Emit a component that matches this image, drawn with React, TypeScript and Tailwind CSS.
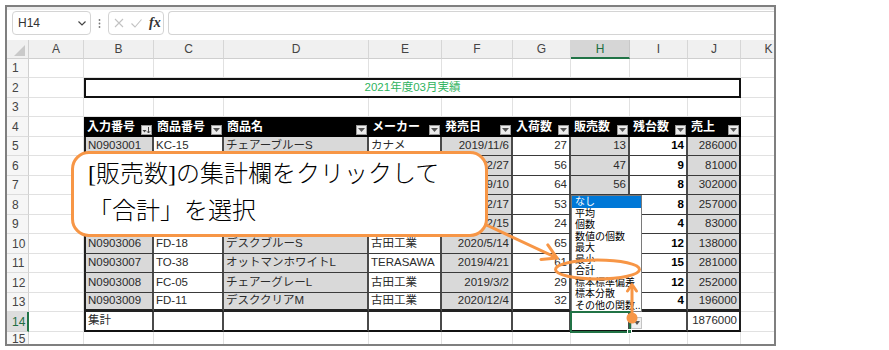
import React from "react";

type Col = { w: string; gray: boolean; right: boolean; bold?: boolean };

const COLS: Col[] = [
  { w: "w-[70px]", gray: true, right: false },
  { w: "w-[70px]", gray: false, right: false },
  { w: "w-[145px]", gray: true, right: false },
  { w: "w-[73px]", gray: false, right: false },
  { w: "w-[71px]", gray: true, right: true },
  { w: "w-[58px]", gray: false, right: true },
  { w: "w-[59px]", gray: true, right: true },
  { w: "w-[58px]", gray: false, right: true, bold: true },
  { w: "w-[53px]", gray: true, right: true },
];

const LETTERS = [
  { l: "A", w: "w-[55px]" },
  { l: "B", w: "w-[70px]" },
  { l: "C", w: "w-[70px]" },
  { l: "D", w: "w-[145px]" },
  { l: "E", w: "w-[73px]" },
  { l: "F", w: "w-[71px]" },
  { l: "G", w: "w-[58px]" },
  { l: "H", w: "w-[59px]" },
  { l: "I", w: "w-[58px]" },
  { l: "J", w: "w-[53px]" },
  { l: "K", w: "w-[56px]" },
];

const HEADERS = ["入力番号", "商品番号", "商品名", "メーカー", "発売日", "入荷数", "販売数", "残台数", "売上"];

const DATA: string[][] = [
  ["N0903001", "KC-15", "チェアーブルーS", "カナメ", "2019/11/6", "27", "13", "14", "286000"],
  ["N0903002", "KC-16", "チェアーブルーL", "カナメ", "2020/2/27", "56", "47", "9", "81000"],
  ["N0903003", "KC-21", "チェアーホワイトS", "カナメ", "2019/9/10", "64", "56", "8", "302000"],
  ["N0903004", "FD-10", "デスクホワイトS", "古田工業", "2020/2/17", "53", "45", "8", "257000"],
  ["N0903005", "TO-12", "オットマンブルーS", "TERASAWA", "2019/2/15", "24", "20", "4", "83000"],
  ["N0903006", "FD-18", "デスクブルーS", "古田工業", "2020/5/14", "65", "53", "12", "138000"],
  ["N0903007", "TO-38", "オットマンホワイトL", "TERASAWA", "2019/4/21", "61", "46", "15", "281000"],
  ["N0903008", "FC-05", "チェアーグレーL", "古田工業", "2019/3/2", "29", "17", "12", "252000"],
  ["N0903009", "FD-11", "デスククリアM", "古田工業", "2020/12/4", "32", "28", "4", "196000"],
];

const ROW_H = [
  "h-[19px]", "h-[20px]", "h-[19px]", "h-[20px]", "h-[19px]", "h-[20px]", "h-[19px]", "h-[20px]",
  "h-[19px]", "h-[20px]", "h-[19px]", "h-[20px]", "h-[19px]", "h-[20px]", "h-[14px]",
];

const MENU = ["なし", "平均", "個数", "数値の個数", "最大", "最小", "合計", "標本標準偏差", "標本分散", "その他の関数..."];

function RowHead({ n }: { n: number }) {
  const sel = n === 14;
  return (
    <div
      className={
        sel
          ? "w-[22px] shrink-0 flex items-center pl-[5px] text-[12px] text-[#1e6e42] bg-[#dddddd] border-b border-b-[#d0d0d0] border-r-2 border-r-[#217346]"
          : "w-[22px] shrink-0 flex items-center pl-[5px] text-[12px] text-[#444] bg-[#f6f6f6] border-b border-b-[#dcdcdc] border-r border-r-[#d0d0d0]"
      }
    >
      {n}
    </div>
  );
}

function ACell() {
  return <div className="w-[55px] shrink-0 border-r border-b border-[#e1e1e1]" />;
}
function KCell() {
  return <div className="w-[56px] shrink-0 border-b border-[#e1e1e1]" />;
}

function FilterBtn({ sort }: { sort?: boolean }) {
  return (
    <span className="shrink-0 self-end mb-[2px] w-[11px] h-[10px] bg-[#ececec] border border-[#9a9a9a] flex items-center justify-center">
      {sort ? (
        <svg width="9" height="8" viewBox="0 0 9 8">
          <path d="M0.5 4h4L2.5 6.5z" fill="#444" />
          <path d="M6.5 1v6M5 5.3l1.5 1.7L8 5.3" stroke="#444" strokeWidth="1" fill="none" />
        </svg>
      ) : (
        <svg width="7" height="4" viewBox="0 0 7 4">
          <path d="M0 0h7L3.5 4z" fill="#555" />
        </svg>
      )}
    </span>
  );
}

function cellClass(ci: number, c: Col, last: boolean, total: boolean) {
  let cls = `${c.w} shrink-0 flex items-center px-[2px] whitespace-nowrap overflow-hidden`;
  cls += ci === 0 ? " border-l-2 border-l-[#1f1f1f]" : "";
  cls += ci === 8 ? " border-r-2 border-r-[#1f1f1f]" : " border-r-2 border-r-[#4a4a4a]";
  if (total) cls += " border-b-2 border-b-[#111]";
  else if (last) cls += " border-b-[3px] border-b-[#222]";
  else cls += " border-b border-b-[#3a3a3a]";
  cls += !total && c.gray ? " bg-[#d9d9d9]" : " bg-white";
  cls += c.right ? " justify-end" : "";
  cls += c.bold && !total ? " font-bold text-black" : " text-[#2b2b2b]";
  return cls;
}

export default function App() {
  return (
    <div className="relative w-[889px] h-[350px] bg-white overflow-hidden pt-[5px] pl-[5px] font-[family-name:Liberation_Sans,Noto_Sans_CJK_JP,sans-serif]">
      {/* window */}
      <div className="w-[771px] h-[341px] border-2 border-[#7f7f7f] flex flex-col overflow-hidden bg-white">
        {/* formula bar */}
        <div className="h-[33px] shrink-0 flex items-start pt-[1px] pl-[5px] border-t-[3px] border-t-[#ececec]">
          <div className="w-[79px] h-[24px] shrink-0 border border-[#d4d4d4] rounded-[4px] flex items-center justify-between pl-[5px] pr-[4px] text-[12px] text-[#333]">
            <span>H14</span>
            <svg width="8" height="5" viewBox="0 0 8 5">
              <path d="M0.5 0.5L4 4L7.5 0.5" stroke="#444" strokeWidth="1.2" fill="none" />
            </svg>
          </div>
          <div className="w-[17px] h-[24px] shrink-0 flex items-center justify-center">
            <svg width="3" height="9" viewBox="0 0 3 9">
              <circle cx="1.5" cy="1" r="0.9" fill="#777" />
              <circle cx="1.5" cy="4.5" r="0.9" fill="#777" />
              <circle cx="1.5" cy="8" r="0.9" fill="#777" />
            </svg>
          </div>
          <div className="w-[56px] h-[24px] shrink-0 border border-[#d4d4d4] rounded-[4px] flex items-center pl-[5px] gap-[7px]">
            <svg width="10" height="10" viewBox="0 0 10 10">
              <path d="M1 1L9 9M9 1L1 9" stroke="#c2c2c2" strokeWidth="1.1" />
            </svg>
            <svg width="11" height="9" viewBox="0 0 11 9">
              <path d="M0.5 4.5L4 8L10.5 0.5" stroke="#c2c2c2" strokeWidth="1.1" fill="none" />
            </svg>
            <span className="font-[family-name:Liberation_Serif,serif] italic font-bold text-[14px] text-[#333] leading-none">
              fx
            </span>
          </div>
          <div className="flex-1 ml-[4px] h-[24px] border border-r-0 border-[#d4d4d4] rounded-l-[4px]" />
        </div>

        {/* column headers */}
        <div className="h-[19px] shrink-0 flex">
          <div className="w-[22px] shrink-0 bg-[#f0f0f0] border-r border-b border-[#d0d0d0] flex items-end justify-end pr-[3px] pb-[2px]">
            <svg width="11" height="11" viewBox="0 0 11 11">
              <path d="M11 0V11H0z" fill="#c9c9c9" />
            </svg>
          </div>
          {LETTERS.map((c) =>
            c.l === "H" ? (
              <div
                key={c.l}
                className={`${c.w} shrink-0 flex items-center justify-center text-[12px] text-[#1e6e42] bg-[#d6d6d6] border-r border-r-[#c8c8c8] border-b-2 border-b-[#217346]`}
              >
                {c.l}
              </div>
            ) : (
              <div
                key={c.l}
                className={`${c.w} shrink-0 flex items-center justify-center text-[12px] text-[#444] bg-[#f0f0f0] border-r border-r-[#d6d6d6] border-b border-b-[#cfcfcf]`}
              >
                {c.l}
              </div>
            )
          )}
        </div>

        {/* rows */}
        {ROW_H.map((h, i) => {
          const n = i + 1;
          let middle: React.ReactNode;
          if (n === 2) {
            middle = (
              <div className="w-[657px] shrink-0 border-2 border-[#111] flex items-center justify-center text-[11.5px] text-[#2fb35e]">
                2021年度03月実績
              </div>
            );
          } else if (n === 4) {
            middle = HEADERS.map((t, ci) => (
              <div
                key={ci}
                className={`${COLS[ci].w} shrink-0 bg-black text-white font-bold text-[12px] flex items-center justify-between pl-[3px] pr-[2px]`}
              >
                <span>{t}</span>
                <FilterBtn sort={ci === 0} />
              </div>
            ));
          } else if (n >= 5 && n <= 13) {
            const row = DATA[n - 5];
            middle = COLS.map((c, ci) => (
              <div key={ci} className={`${cellClass(ci, c, n === 13, false)} text-[11.5px]`}>
                {row[ci]}
              </div>
            ));
          } else if (n === 14) {
            middle = COLS.map((c, ci) => (
              <div key={ci} className={`${cellClass(ci, c, false, true)} text-[11.5px]`}>
                {ci === 0 ? "集計" : ci === 8 ? "1876000" : ""}
              </div>
            ));
          } else {
            middle = COLS.map((c, ci) => (
              <div key={ci} className={`${c.w} shrink-0 border-r border-b border-[#e1e1e1]`} />
            ));
          }
          return (
            <div key={n} className={`${h} shrink-0 flex`}>
              <RowHead n={n} />
              <ACell />
              {middle}
              <KCell />
            </div>
          );
        })}
      </div>

      {/* dropdown list */}
      <div className="absolute left-[571px] top-[195px] w-[71px] h-[117px] bg-white border border-[#7a7a7a] flex flex-col text-[10px] text-black">
        {MENU.map((m, i) => (
          <div
            key={m}
            className={
              i === 0
                ? "h-[11.5px] leading-[11.5px] pl-[3px] bg-[#0078d7] text-white whitespace-nowrap overflow-hidden"
                : "h-[11.5px] leading-[11.5px] pl-[3px] whitespace-nowrap overflow-hidden"
            }
          >
            {m}
          </div>
        ))}
      </div>

      {/* selected cell H14 */}
      <div className="absolute left-[570px] top-[311px] w-[61px] h-[22px] border-2 border-[#217346]" />
      <div className="absolute left-[627px] top-[329px] w-[5px] h-[5px] bg-[#217346] border border-white" />
      {/* H14 dropdown button */}
      <div className="absolute left-[631px] top-[317px] w-[11px] h-[12px] bg-[#f0f0f0] border border-[#c4c4c4] flex items-center justify-center">
        <svg width="6" height="4" viewBox="0 0 6 4">
          <path d="M0 0h6L3 4z" fill="#555" />
        </svg>
      </div>

      {/* orange annotations */}
      <svg className="absolute left-0 top-0 pointer-events-none" width="889" height="350" viewBox="0 0 889 350">
        <g stroke="#f79646" strokeWidth="3" fill="none" strokeLinecap="round" strokeLinejoin="round">
          <path d="M478 221L557 258" />
          <path d="M541 259.4L557 258L547.8 244.9" />
          <ellipse cx="597.5" cy="269.5" rx="42" ry="9.5" />
          <path d="M632 287V313" />
          <path d="M627.5 291L632 284.5L636.5 291" />
        </g>
        <circle cx="632" cy="318" r="5.5" fill="#f79646" />
      </svg>

      {/* callout */}
      <div className="absolute left-[71px] top-[151px] w-[417px] h-[86px] rounded-[18px] border-[3px] border-[#f79646] bg-white pl-[14px] pt-[2px] text-[24px] leading-[37px] font-light text-black font-[family-name:Liberation_Serif,Noto_Sans_CJK_JP,serif]">
        <div className="whitespace-nowrap">[販売数]の集計欄をクリックして</div>
        <div className="whitespace-nowrap">「合計」を選択</div>
      </div>
    </div>
  );
}
